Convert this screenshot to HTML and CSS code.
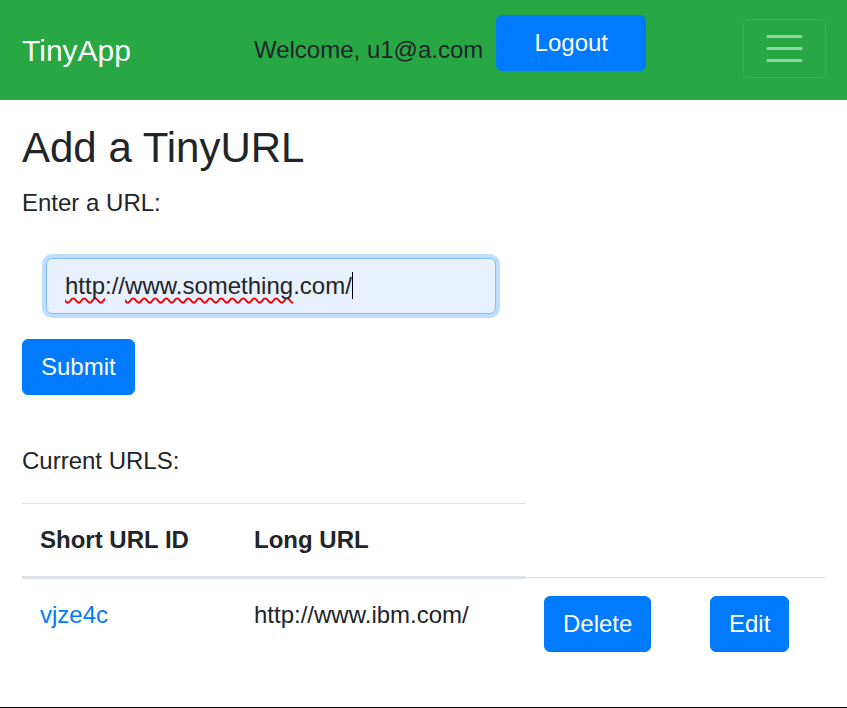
FILE: index.html
```html
<!DOCTYPE html>
<html lang="en">
<head>
<meta charset="utf-8">
<title>TinyApp</title>
<link rel="stylesheet" href="styles.css">
</head>
<body>
<nav class="navbar">
  <a class="brand" href="#">TinyApp</a>
  <span class="welcome">Welcome, u1@a.com</span>
  <button class="btn btn-logout" type="button">Logout</button>
  <button class="toggler" type="button" aria-label="Toggle navigation">
    <svg width="45" height="45" viewBox="0 0 30 30"><path d="M4 7h22M4 15h22M4 23h22" stroke="rgba(255,255,255,0.5)" stroke-width="2" stroke-linecap="round" stroke-miterlimit="10"/></svg>
  </button>
</nav>
<main class="main">
  <h1 class="title">Add a TinyURL</h1>
  <p class="label">Enter a URL:</p>
  <div class="field" role="textbox"><span class="misspelt">http</span>://<span class="misspelt">www.something</span>.com/<span class="caret"></span></div>
  <button class="btn btn-submit" type="button">Submit</button>
  <p class="current">Current URLS:</p>
  <table class="urls">
    <colgroup>
      <col class="col-a"><col class="col-b"><col class="col-c"><col class="col-d">
    </colgroup>
    <thead>
      <tr><th>Short URL ID</th><th>Long URL</th></tr>
    </thead>
    <tbody>
      <tr>
        <td><a class="link" href="#">vjze4c</a></td>
        <td>http://www.ibm.com/</td>
        <td><button class="btn" type="button">Delete</button></td>
        <td><button class="btn" type="button">Edit</button></td>
      </tr>
    </tbody>
  </table>
</main>
</body>
</html>
```
FILE: styles.css
```css
html { height: 100%; }
body {
  margin: 0;
  min-height: 100%;
  box-sizing: border-box;
  border-bottom: 1px solid #000;
  font-family: "Liberation Sans", Arial, sans-serif;
  font-size: 24px;
  line-height: 1.5;
  color: #212529;
  background: #fff;
}
.navbar {
  display: flex;
  align-items: center;
  height: 100px;
  padding: 0 21px 0 22px;
  background: #28a745;
}
.brand {
  font-size: 30px;
  line-height: 45px;
  color: #fff;
  text-decoration: none;
}
.welcome {
  margin-left: 123px;
  color: #212529;
}
.btn {
  font-family: inherit;
  font-size: 24px;
  line-height: 36px;
  padding: 9px 18px;
  border: 1px solid #007bff;
  border-radius: 6px;
  background: #007bff;
  color: #fff;
  cursor: pointer;
}
.btn-logout {
  align-self: flex-start;
  margin: 15px 0 0 13px;
  width: 150px;
}
.toggler {
  align-self: flex-start;
  margin: 19px 0 0 auto;
  width: 83px;
  height: 59px;
  padding: 6px 18px;
  background: transparent;
  border: 1px solid rgba(255,255,255,0.1);
  border-radius: 6px;
  display: flex;
  align-items: center;
  justify-content: center;
}
.toggler svg { display: block; }
.main {
  padding: 0 21px 0 22px;
}
.title {
  margin: 23px 0 12px;
  font-size: 42px;
  font-weight: 400;
  line-height: 1.2;
}
.label {
  margin: 0;
}
.field {
  margin: 37px 0 25px 24px;
  width: 450px;
  height: 56px;
  box-sizing: border-box;
  padding: 9px 18px;
  border: 1px solid #80bdff;
  border-radius: 6px;
  background: #e8f0fe;
  box-shadow: 0 0 0 4px rgba(0,123,255,0.25);
  color: #212529;
  white-space: nowrap;
}
.misspelt {
  text-decoration: underline wavy #e00;
  text-decoration-thickness: 1.5px;
  text-underline-offset: 3px;
  text-decoration-skip-ink: none;
}
.caret {
  display: inline-block;
  width: 0;
  height: 27px;
  border-left: 1px solid #000;
  vertical-align: -5px;
}
.btn-submit {
  display: block;
}
.current {
  margin: 48px 0 24px;
}
.urls {
  width: 804px;
  border-collapse: collapse;
  table-layout: fixed;
}
.col-a { width: 214px; }
.col-b { width: 290px; }
.col-c { width: 166px; }
.col-d { width: 134px; }
.urls th, .urls td {
  padding: 18px;
  text-align: left;
  vertical-align: top;
  border-top: 1px solid #dee2e6;
}
.urls th {
  font-weight: 700;
  vertical-align: bottom;
  border-bottom: 3px solid #dee2e6;
}
.link {
  color: #007bff;
  text-decoration: none;
}
```
